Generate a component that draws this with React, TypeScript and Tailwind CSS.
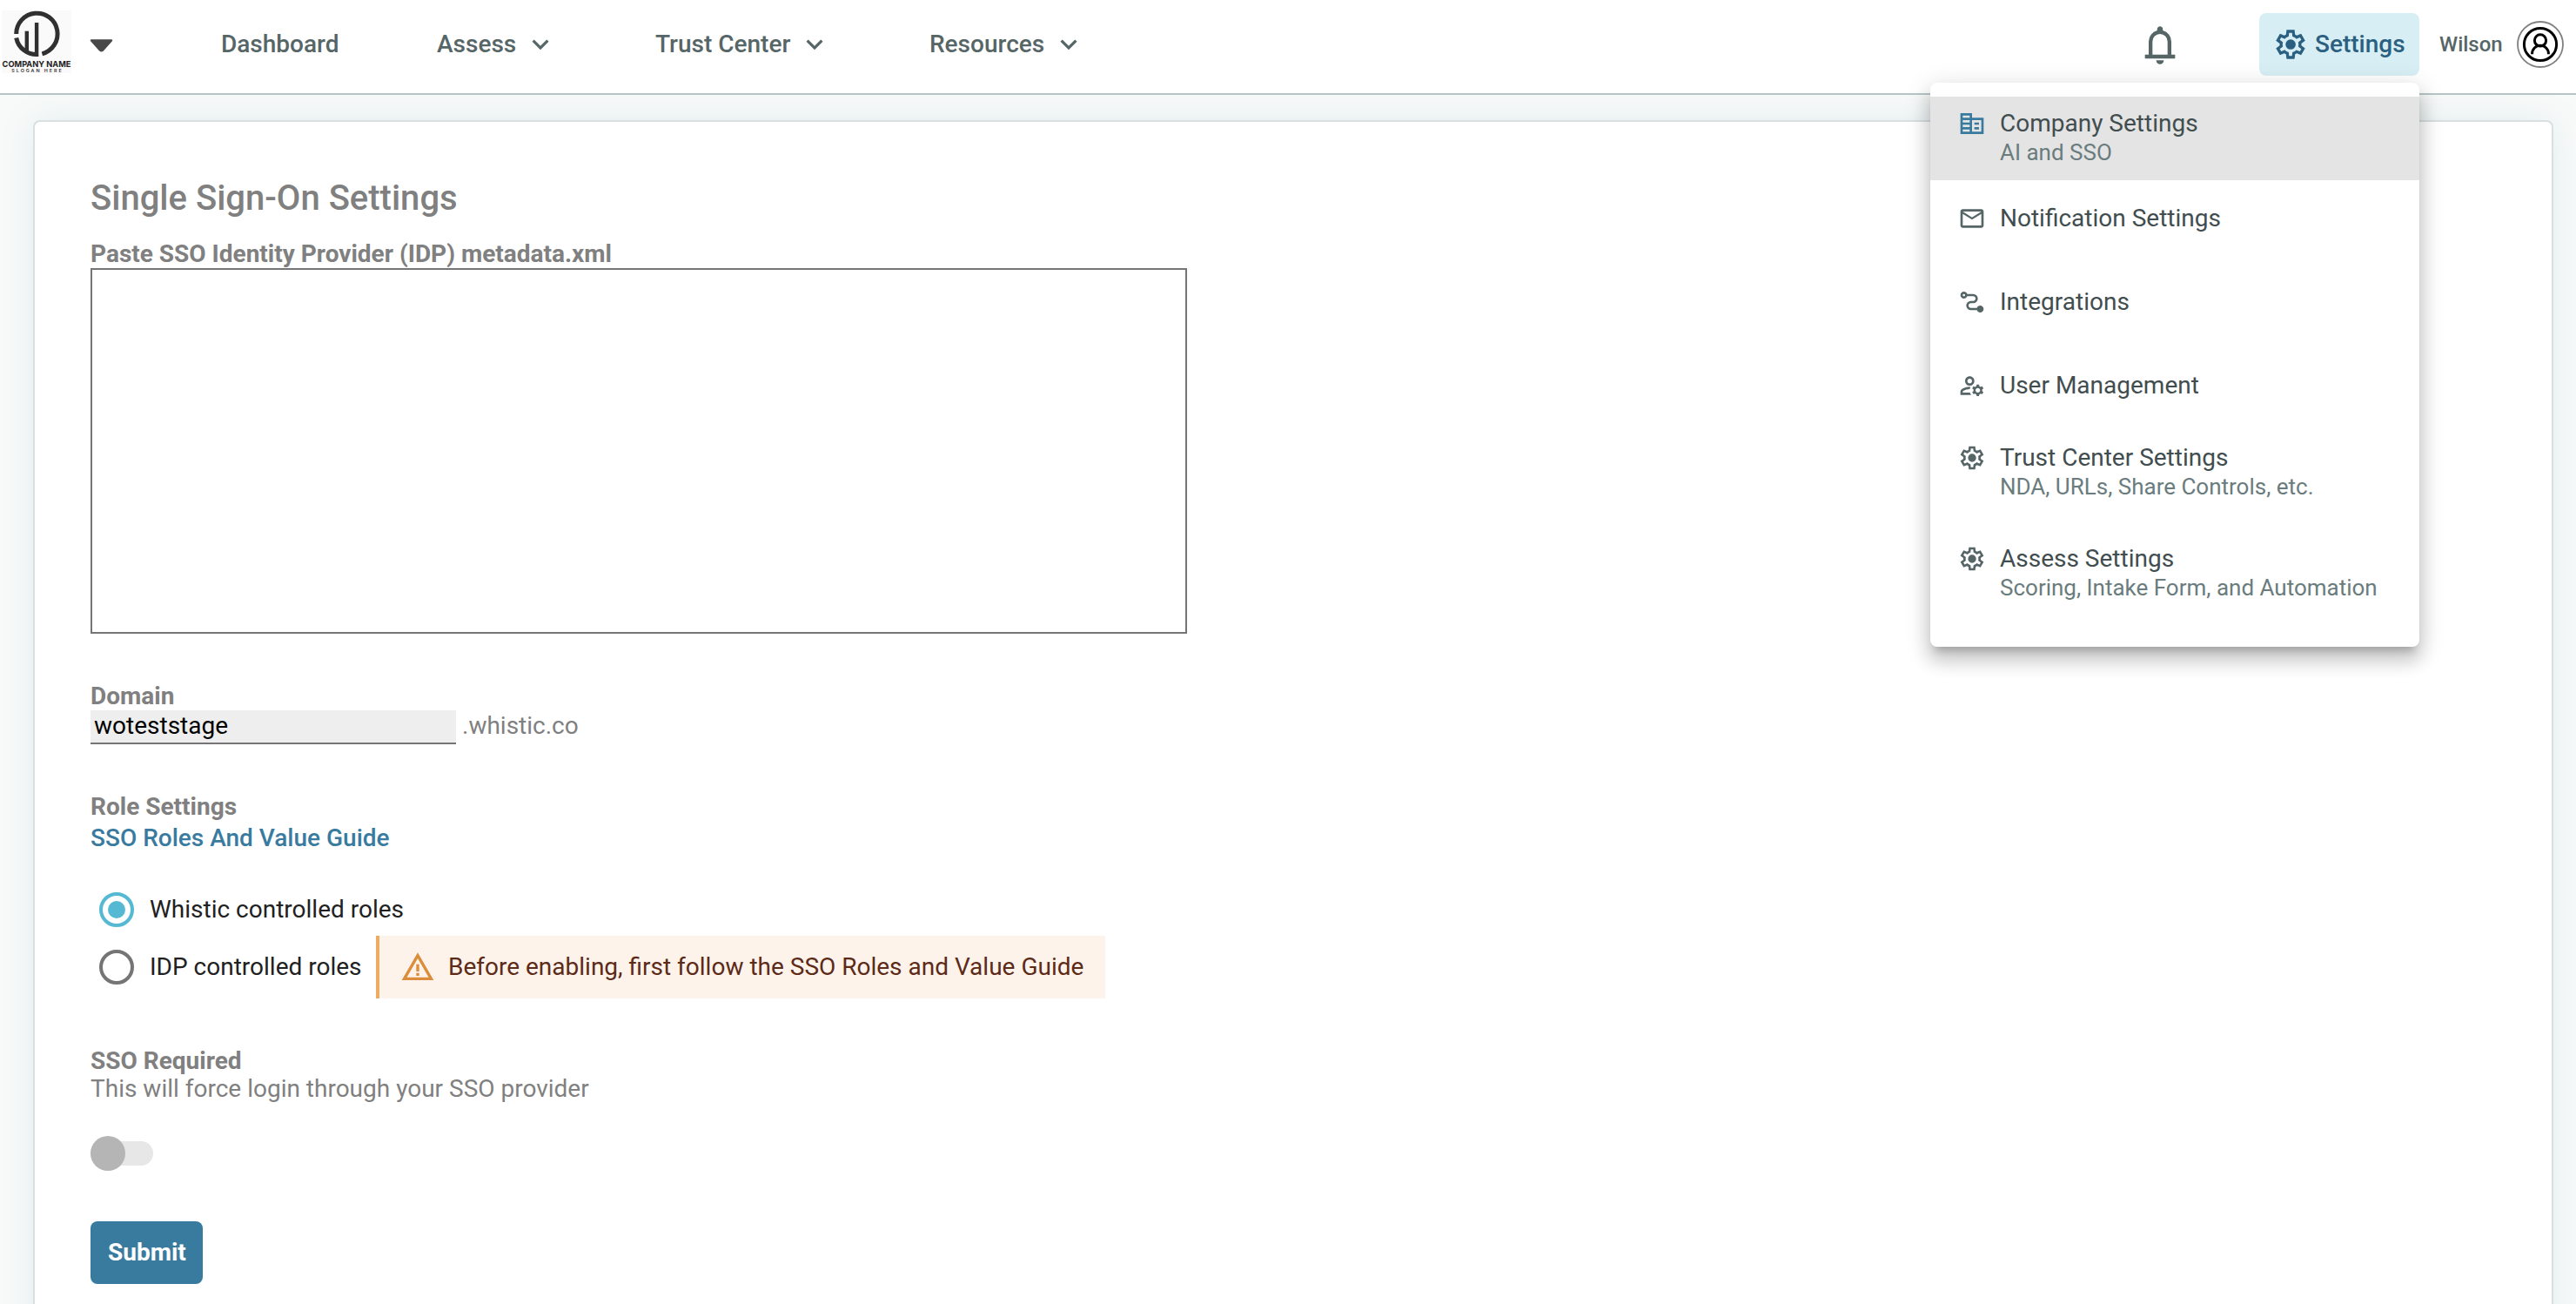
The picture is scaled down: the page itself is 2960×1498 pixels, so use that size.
import type { ReactNode } from "react";
import { MdKeyboardArrowDown, MdMailOutline, MdOutlineManageAccounts, MdWarningAmber } from "react-icons/md";

function Symbol({ d, className }: { d: string; className: string }) {
  return (
    <svg viewBox="0 -960 960 960" fill="currentColor" className={className}>
      <path d={d} />
    </svg>
  );
}

const GEAR =
  "m370-80-16-128q-13-5-24.5-12T307-235l-119 50L78-375l103-78q-1-7-1-13.5v-27q0-6.5 1-13.5L78-585l110-190 119 50q11-8 23-15t24-12l16-128h220l16 128q13 5 24.5 12t22.5 15l119-50 110 190-103 78q1 7 1 13.5v27q0 6.5-2 13.5l103 78-110 190-118-50q-11 8-23 15t-24 12L590-80H370Zm70-80h79l14-106q31-8 57.5-23.5T639-327l99 41 39-68-86-65q5-14 7-29.5t2-31.5q0-16-2-31.5t-7-29.5l86-65-39-68-99 42q-22-23-48.5-38.5T533-694l-13-106h-79l-14 106q-31 8-57.5 23.5T321-633l-99-41-39 68 86 64q-5 15-7 30t-2 32q0 16 2 31t7 30l-86 65 39 68 99-42q22 23 48.5 38.5T427-266l13 106Zm42-180q58 0 99-41t41-99q0-58-41-99t-99-41q-59 0-99.5 41T342-480q0 58 40.5 99t99.5 41Z";
const BELL =
  "M160-200v-80h80v-280q0-83 50-147.5T420-792v-28q0-25 17.5-42.5T480-880t42.5 17.5T540-820v28q80 20 130 84.5T720-560v280h80v80H160ZM480-80q-33 0-56.5-23.5T400-160h160q0 33-23.5 56.5T480-80ZM320-280h320v-280q0-66-47-113t-113-47q-66 0-113 47t-47 113v280Z";
const PATH =
  "M760-120q-39 0-70-22.5T647-200H440q-66 0-113-47t-47-113q0-66 47-113t113-47h80q33 0 56.5-23.5T600-600q0-33-23.5-56.5T520-680H313q-13 35-43.5 57.5T200-600q-50 0-85-35t-35-85q0-50 35-85t85-35q39 0 69.5 22.5T313-760h207q66 0 113 47t47 113q0 66-47 113t-113 47h-80q-33 0-56.5 23.5T360-360q0 33 23.5 56.5T440-280h207q13-35 43.5-57.5T760-360q50 0 85 35t35 85q0 50-35 85t-85 35ZM200-680q17 0 28.5-11.5T240-720q0-17-11.5-28.5T200-760q-17 0-28.5 11.5T160-720q0 17 11.5 28.5T200-680Z";

function Logo() {
  return (
    <svg viewBox="0 0 80 72" className="h-[72px] w-[80px] overflow-visible bg-[#fafafa]">
      <g fill="none" stroke="#303030" strokeWidth="5">
        <path d="M16.7 27A23.7 23.7 0 1 1 46.4 49.8" />
        <path d="M16.7 31.4A23.7 23.7 0 0 0 42 50.5" />
        <path d="M28.8 23.7V46" strokeWidth="4.4" />
        <path d="M40.1 14V52.6" strokeWidth="4.4" />
      </g>
      <text x="0.6" y="65" fontFamily="Inter, sans-serif" fontWeight="700" fontSize="9.6" textLength="78.8" lengthAdjust="spacingAndGlyphs" fill="#222">
        COMPANY NAME
      </text>
      <text x="11.3" y="71" fontFamily="Inter, sans-serif" fontWeight="600" fontSize="5.4" textLength="57.5" fill="#333">
        SLOGAN HERE
      </text>
    </svg>
  );
}

function NavItem({ label, width, menu }: { label: string; width: string; menu?: boolean }) {
  return (
    <a className={`flex items-center gap-[9px] ${width}`}>
      {label}
      {menu && <MdKeyboardArrowDown className="size-[38px]" />}
    </a>
  );
}

function MenuItem({ icon, title, sub, className = "" }: { icon: ReactNode; title: string; sub?: string; className?: string }) {
  return (
    <div className={`flex gap-4 px-8 ${sub ? "pt-[14px]" : "pt-[27px]"} ${className}`}>
      <div className="mt-px size-8 shrink-0 text-[#566667]">{icon}</div>
      <div className="whitespace-nowrap">
        <div className="text-[28px] leading-[33px] text-[#414d4e]">{title}</div>
        {sub && <div className="mt-[2px] text-[26px] leading-[30px] text-[#6a7c7d]">{sub}</div>}
      </div>
    </div>
  );
}

function SettingsMenu() {
  return (
    <div className="absolute left-[2218px] top-[95px] z-20 h-[648px] w-[562px] rounded-lg bg-white py-4 shadow-[0_10px_10px_-6px_rgba(0,0,0,0.2),0_16px_20px_2px_rgba(0,0,0,0.14),0_6px_28px_4px_rgba(0,0,0,0.12)]">
      <MenuItem
        className="h-24 bg-[#e4e4e4]"
        icon={
          <svg viewBox="0 0 24 24" fill="#397b9f" className="size-8">
            <path d="M12 7V3H2v18h20V7H12zM10 19H4v-2h6v2zm0-4H4v-2h6v2zm0-4H4V9h6v2zm0-4H4V5h6v2zm10 12h-8v-10h8v10zm-2-8h-4v2h4v-2zm0 4h-4v2h4v-2z" />
          </svg>
        }
        title="Company Settings"
        sub="AI and SSO"
      />
      <MenuItem className="h-24" icon={<MdMailOutline className="size-8" />} title="Notification Settings" />
      <MenuItem className="h-24" icon={<Symbol d={PATH} className="size-8" />} title="Integrations" />
      <MenuItem className="h-24" icon={<MdOutlineManageAccounts className="size-8" />} title="User Management" />
      <MenuItem className="h-[116px]" icon={<Symbol d={GEAR} className="size-8" />} title="Trust Center Settings" sub="NDA, URLs, Share Controls, etc." />
      <MenuItem className="h-[116px]" icon={<Symbol d={GEAR} className="size-8" />} title="Assess Settings" sub="Scoring, Intake Form, and Automation" />
    </div>
  );
}

function Header() {
  return (
    <header className="relative z-10 flex h-[109px] shrink-0 items-start border-b-2 border-[#b7c5c7] bg-white text-[28px] font-medium leading-[33px] text-[#566667]">
      <div className="flex w-[254px] shrink-0 items-start gap-[21px] pl-[2px] pt-3">
        <Logo />
        <svg viewBox="0 0 27 15" className="mt-[33px] h-[15px] w-[27px]">
          <path d="M2 1.5H25L15 12.6Q13.5 14 12 12.6Z" fill="#484848" stroke="#484848" strokeWidth="2.4" strokeLinejoin="round" />
        </svg>
      </div>
      <nav className="flex h-[101px] items-center">
        <NavItem label="Dashboard" width="w-[248px]" />
        <NavItem label="Assess" width="w-[251px]" menu />
        <NavItem label="Trust Center" width="w-[315px]" menu />
        <NavItem label="Resources" width="w-[200px]" menu />
      </nav>
      <div className="ml-auto flex items-start pr-[14px]">
        <Symbol d={BELL} className="mt-[26px] size-[52px]" />
        <button className="ml-[88px] mt-[15px] flex h-[72px] w-[184px] items-center gap-2 rounded-lg bg-[#d7eff4] pb-px pl-4 text-[#2b6080]">
          <Symbol d={GEAR} className="size-10" />
          Settings
        </button>
        <span className="ml-[23px] mt-[37px] w-[89px] text-2xl leading-[28px]">Wilson</span>
        <svg viewBox="0 0 54 54" fill="none" stroke="#000" strokeWidth="3" className="mt-6 size-[54px]">
          <circle cx="27" cy="27" r="26" stroke="#808080" strokeWidth="1.8" />
          <circle cx="27" cy="27" r="18.6" />
          <circle cx="27" cy="22.4" r="6.6" />
          <path d="M17.6 38.3V37.6A9.4 9.4 0 0 1 36.4 37.6V38.3" />
        </svg>
      </div>
    </header>
  );
}

export default function App() {
  return (
    <div className="relative flex h-screen flex-col overflow-hidden bg-[#f8faf9] font-[Roboto,sans-serif] text-[28px] leading-[33px] text-[#808080]">
      <Header />
      <SettingsMenu />
      <main className="ml-[38px] mr-[26px] mt-[29px] h-[1500px] shrink-0 rounded-lg border-2 border-[#d8e0e2] bg-white px-16 pt-16 shadow-[0_0_40px_rgba(57,123,158,0.11)]">
        <h1 className="text-[40px] font-medium leading-[47px]">Single Sign-On Settings</h1>

        <label className="mt-6 block font-bold">Paste SSO Identity Provider (IDP) metadata.xml</label>
        <div className="h-[420px] w-[1260px] border-2 border-[#757575] bg-white" />

        <label className="mt-[55px] block font-bold">Domain</label>
        <div className="flex gap-[7px]">
          <div className="h-[39px] w-[420px] border-b-2 border-[#757575] bg-[#eeeeee] pl-1 pt-px text-black">woteststage</div>
          <span className="pt-px">.whistic.co</span>
        </div>

        <div className="mt-[55px] font-bold">Role Settings</div>
        <a className="mt-[3px] block font-medium text-[#397b9f]">SSO Roles And Value Guide</a>

        <div className="mt-[46px] flex h-10 items-center gap-[18px] pl-[10px] text-[#212121]">
          <span className="flex size-10 items-center justify-center rounded-full border-4 border-[#56b9d3]">
            <span className="size-5 rounded-full bg-[#56b9d3]" />
          </span>
          <span className="pb-px">Whistic controlled roles</span>
        </div>
        <div className="mt-[10px] flex h-[72px] items-center pl-[10px] text-[#212121]">
          <span className="size-10 rounded-full border-4 border-[#757575]" />
          <span className="ml-[18px] w-[260px] pb-px">IDP controlled roles</span>
          <div className="flex h-[72px] w-[838px] items-center border-l-4 border-[#eeab63] bg-[#fdf3eb] pl-6 text-[#5c2a17]">
            <MdWarningAmber className="size-10 text-[#dc8d3c]" />
            <span className="ml-[15px] whitespace-nowrap pb-px">Before enabling, first follow the SSO Roles and Value Guide</span>
          </div>
        </div>

        <div className="mt-[55px] h-8 font-bold">SSO Required</div>
        <div>This will force login through your SSO provider</div>

        <div className="mt-[38px] flex h-10 w-[72px] items-center">
          <span className="h-7 w-[72px] shrink-0 rounded-full bg-[#e7e7e7]" />
          <span className="-ml-[72px] size-10 shrink-0 rounded-full bg-[#b5b5b5]" />
        </div>

        <button className="mt-[58px] flex h-[72px] w-[129px] items-center rounded-lg bg-[#397b9f] pb-px pl-5 font-bold text-white">Submit</button>
      </main>
    </div>
  );
}
